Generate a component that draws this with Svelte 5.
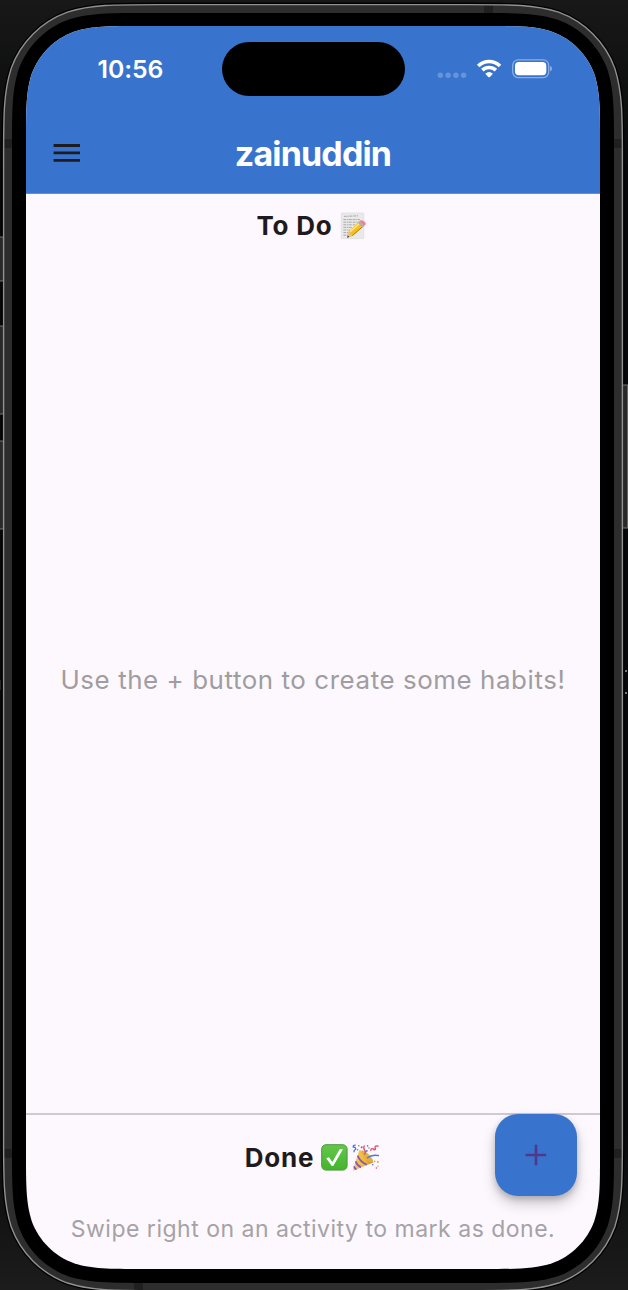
<script>
  // Continuous-curvature rounded rectangle.
  function squircle(x, y, w, h, r) {
    const a = 1.52866 * r, b = 1.08849 * r, c = 0.86841 * r, d = 0.63149 * r, e = 0.07491 * r, f = 0.37282 * r, g = 0.16906 * r;
    const R = x + w, B = y + h;
    return `M${x + a} ${y}H${R - a}C${R - b} ${y} ${R - c} ${y} ${R - d} ${y + e}C${R - f} ${y + g} ${R - g} ${y + f} ${R - e} ${y + d}C${R} ${y + c} ${R} ${y + b} ${R} ${y + a}V${B - a}C${R} ${B - b} ${R} ${B - c} ${R - e} ${B - d}C${R - g} ${B - f} ${R - f} ${B - g} ${R - d} ${B - e}C${R - c} ${B} ${R - b} ${B} ${R - a} ${B}H${x + a}C${x + b} ${B} ${x + c} ${B} ${x + d} ${B - e}C${x + f} ${B - g} ${x + g} ${B - f} ${x + e} ${B - d}C${x} ${B - c} ${x} ${B - b} ${x} ${B - a}V${y + a}C${x} ${y + b} ${x} ${y + c} ${x + e} ${y + d}C${x + g} ${y + f} ${x + f} ${y + g} ${x + d} ${y + e}C${x + c} ${y} ${x + b} ${y} ${x + a} ${y}Z`;
  }
  const outer = squircle(3.6, 4.6, 618.8, 1286, 101);
  const inner = squircle(12, 13, 602, 1270, 89);
  const screenClip = squircle(0, 0, 574, 1243, 76);
</script>

<div class="stage">
  <svg class="frame" width="628" height="1290" viewBox="0 0 628 1290" aria-hidden="true">
    <defs>
      <linearGradient id="side" x1="0" y1="0" x2="0" y2="1">
        <stop offset="0" stop-color="#181818" />
        <stop offset=".13" stop-color="#070809" />
        <stop offset=".87" stop-color="#070809" />
        <stop offset="1" stop-color="#1c1c1c" />
      </linearGradient>
      <clipPath id="shell"><path d={outer} /></clipPath>
    </defs>
    <rect width="628" height="1290" fill="url(#side)" />
    <path d={outer} fill="#000" stroke="#000" stroke-width="4" />
    <g fill="#292929" stroke="#777" stroke-width="1">
      <rect x="-8" y="237" width="12" height="44" rx="2" />
      <rect x="-8" y="326" width="12" height="88" rx="2" />
      <rect x="-8" y="441" width="12" height="88" rx="2" />
      <rect x="621.5" y="385" width="12" height="143" rx="2" />
    </g>
    <path d="M627.5 385V528" stroke="#666" />
    <path d={outer} fill="#2d2d2d" />
    <g clip-path="url(#shell)" fill="#202020">
      <path d="M3 139H13V148H3ZM613 139H624V148H613ZM3 1149H13V1158H3ZM613 1149H624V1158H613ZM484 4H493V14H484ZM134 1282H143V1290H134Z" />
    </g>
    <path d={outer} fill="none" stroke="#919191" stroke-width="1.4" />
    <path d={inner} fill="#000" />
    <path d="M625 670h2v2h-2zM625 692h2v2h-2z" fill="#777" />
    <path d="M0 680V690" stroke="#444" />
  </svg>

  <main class="screen" style:clip-path={`path("${screenClip}")`}>
    <header>
      <div class="status">
        <time>10:56</time>
        <div class="island"></div>
        <svg class="signals" width="116" height="24" viewBox="0 0 116 24">
          <g fill="#fff" opacity=".23">
            <circle cx="3.3" cy="18.2" r="2.7" /><circle cx="11.1" cy="18.2" r="2.7" /><circle cx="18.9" cy="18.2" r="2.7" /><circle cx="26.6" cy="18.2" r="2.7" />
          </g>
          <g fill="none" stroke="#fff" stroke-width="3.7">
            <path d="M41.2 9C47.5 3 56.7 3 63 9" />
            <path d="M45.3 13.2C49.2 9.6 55 9.6 58.9 13.2" />
          </g>
          <path d="M48.3 16.8Q52.1 13.4 55.9 16.8L52.9 19.9Q52.1 20.6 51.3 19.9Z" fill="#fff" />
          <rect x="75.7" y="2.8" width="36" height="17.8" rx="5.5" fill="none" stroke="#fff" stroke-opacity=".42" stroke-width="1.3" />
          <rect x="78" y="5" width="31.3" height="13.3" rx="3.7" fill="#fff" />
          <path d="M113.2 9V14.4Q115 13.6 115 11.7T113.2 9Z" fill="#fff" opacity=".48" />
        </svg>
      </div>
      <div class="appbar">
        <svg class="menu" width="28" height="20" viewBox="0 0 28 20"><path d="M.6 2.5H27M.6 9.9H27M.6 17.3H27" stroke="#1d1b20" stroke-width="2.8" /></svg>
        <h1>zainuddin</h1>
      </div>
    </header>

    <section class="todo">
      <h2>
        <span class="t1">To Do</span>
        <svg class="memo" width="27" height="28" viewBox="0 0 27 28">
          <rect x="1.3" y="1" width="22.5" height="25.6" rx=".6" fill="#e9e9e9" stroke="#dcdcdc" stroke-width=".7" />
          <g stroke="#999" stroke-width=".8" fill="none" stroke-dasharray="2.8 .7 1.4 .5 3 .9">
            <path d="M4 4.4L18 3.8M3.4 7.6H20M3.4 10.2H20M3.4 12.8H15M3.4 15.4H12M3.4 18H10M3.4 20.6H8M3.4 23.2H10" />
          </g>
          <path d="M8.6 19.4L19.4 9.3L23.9 14L12.4 24L7.4 25.4Z" fill="#f4bd25" />
          <path d="M10 19.9L20.6 10.5" stroke="#ffe17a" stroke-width="1.7" />
          <path d="M12.3 23.7L23.6 13.8" stroke="#bd7910" stroke-width="1" />
          <path d="M8.6 19.4L7.4 25.4L12.4 24Z" fill="#e8c28d" />
          <path d="M7.9 23.4L7 25.7L9.4 25Z" fill="#333" />
          <path d="M17.9 10.8L19.6 9.2L24.1 13.9L22.3 15.4Z" fill="#a9b1b7" />
          <path d="M19.6 9.2L20.7 8.3Q22.6 7.7 24.6 9.8T25.2 12.9L24.1 13.9Z" fill="#ec8296" />
        </svg>
      </h2>
      <p class="hint">Use the + button to create some habits!</p>
    </section>

    <section class="done">
      <h2>
        <span class="t2">Done</span>
        <svg class="check" width="27" height="27" viewBox="0 0 27 27">
          <defs><linearGradient id="leaf" x1="0" y1="0" x2="0" y2="1"><stop stop-color="#65c64c" /><stop offset="1" stop-color="#43b52c" /></linearGradient></defs>
          <rect x=".7" y=".7" width="25.4" height="25.4" rx="4.3" fill="url(#leaf)" stroke="#4b9b3a" stroke-width="1" />
          <path d="M5.2 14.2L8 13.2L11.3 18L18.7 5.3H22L12.2 22H10.8Z" fill="#fff" />
        </svg>
        <svg class="party" width="28" height="28" viewBox="0 0 28 28">
          <defs><linearGradient id="gold"><stop stop-color="#f6cf5f" /><stop offset=".6" stop-color="#efb832" /><stop offset="1" stop-color="#c98a1e" /></linearGradient></defs>
          <path d="M7.3 6.2Q12 6 17.5 12.2Q21.5 16.2 21.2 18.6L2 26.5Q.8 26.8 1 25.4Z" fill="url(#gold)" />
          <ellipse cx="15.3" cy="12.5" rx="2.5" ry="8" transform="rotate(-43 15.3 12.5)" fill="#e0af4c" />
          <path d="M5.6 11.6Q8 17.6 14.7 20.7M3.7 17.2Q5 21.6 9 23.4M2 22.2Q2.5 24.4 4.5 25.4" stroke="#8b55bd" stroke-width="1.7" fill="none" />
          <g fill="none" stroke-width="1.3">
            <path d="M3.7 1.2Q.8.8 1.2 3Q4.2 3 3.6 5.5Q1.5 6.2 2.2 8.2M15 14Q20 10.1 27 11.7" stroke="#4777de" />
            <path d="M12.4 10.5Q14.3 8 12.6 6T12.5 1.5M19 7Q18.4 4.3 20.6 4.6T22 5.7Q24.1 6 23.2 3.7T26.6 2.2" stroke="#e0506f" />
          </g>
          <g fill="#dd4268"><circle cx="9.7" cy="3.2" r="1" /><circle cx="15.6" cy="1.9" r=".8" /><circle cx="24.4" cy="24" r=".8" /><circle cx="6.8" cy="1.8" r=".7" /></g>
          <g fill="#4777de"><circle cx="14.8" cy="7" r=".9" /><circle cx="5.7" cy="5.8" r=".7" /><circle cx="20.8" cy="20.8" r=".8" /><circle cx="17" cy="4" r=".7" /></g>
          <g fill="#e9a04c"><circle cx="25.9" cy="18.1" r="1" /><circle cx="22.6" cy="17.4" r=".8" /><circle cx="26" cy="22.2" r=".7" /></g>
        </svg>
      </h2>
      <p class="swipe">Swipe right on an activity to mark as done.</p>
      <button aria-label="Add">
        <svg width="22" height="22" viewBox="0 0 22 22"><path d="M.6 11H21.2M11 .7V21.3" stroke="#4f378b" stroke-width="2.6" /></svg>
      </button>
    </section>
  </main>
</div>

<style>
  :global(body) { margin: 0; background: #070809; }
  .stage { position: relative; width: 628px; height: 1290px; box-sizing: border-box; padding: 26px 28px 21px 26px; overflow: hidden; font-family: Inter, "Liberation Sans", sans-serif; }
  .frame { position: absolute; inset: 0; }
  .screen { position: relative; width: 574px; height: 1243px; background: #fdf8fe; display: flex; flex-direction: column; color: #1d1b20; }
  h1, h2, p { margin: 0; white-space: nowrap; }
  header { height: 168px; box-sizing: border-box; border-bottom: 1px solid #5e8fd8; background: #3874cd; color: #fff; }
  .status { height: 86px; display: grid; grid-template-columns: 195.5px 183px 1fr; align-items: center; }
  time { font-size: 24.8px; font-weight: 600; letter-spacing: -0.1px; padding-left: 71.5px; line-height: 30px; }
  .island { width: 183px; height: 54px; border-radius: 27px; background: #000; }
  .signals { margin-left: 32.5px; margin-top: -1px; }
  .appbar { height: 81px; display: grid; grid-template-columns: 54px 1fr 54px; align-items: center; }
  .menu { margin-left: 27px; }
  h1 { font-size: 34px; font-weight: 700; letter-spacing: -.85px; text-align: center; line-height: 40px; padding-top: 2px; }
  .todo { height: 919px; display: flex; flex-direction: column; border-bottom: 2px solid #cfcad1; box-sizing: content-box; }
  h2 { display: flex; justify-content: center; align-items: center; height: 64px; font-size: 26px; font-weight: 700; line-height: 32px; letter-spacing: .75px; }
  .todo h2 { padding-right: 2px; }
  .memo { margin-left: 8px; }
  .hint { text-align: center; margin-top: 405px; font-size: 25.9px; line-height: 33px; color: #9f9da0; letter-spacing: .58px; }
  .done { position: relative; flex: 1; }
  .done h2 { height: 85px; padding-right: 1px; }
  .check { margin-left: 7px; }
  .party { margin-left: 4px; }
  .swipe { text-align: center; margin-top: 14px; font-size: 23px; line-height: 30px; color: #a5a2a7; letter-spacing: .5px; }
  button { position: absolute; left: 469px; top: -1px; width: 82px; height: 82px; padding: 0; border: 0; border-radius: 23px; background: #3874cd; display: grid; place-items: center; box-shadow: 0 8px 14px rgba(0,0,0,.18), 0 3px 6px rgba(0,0,0,.2); }
</style>
